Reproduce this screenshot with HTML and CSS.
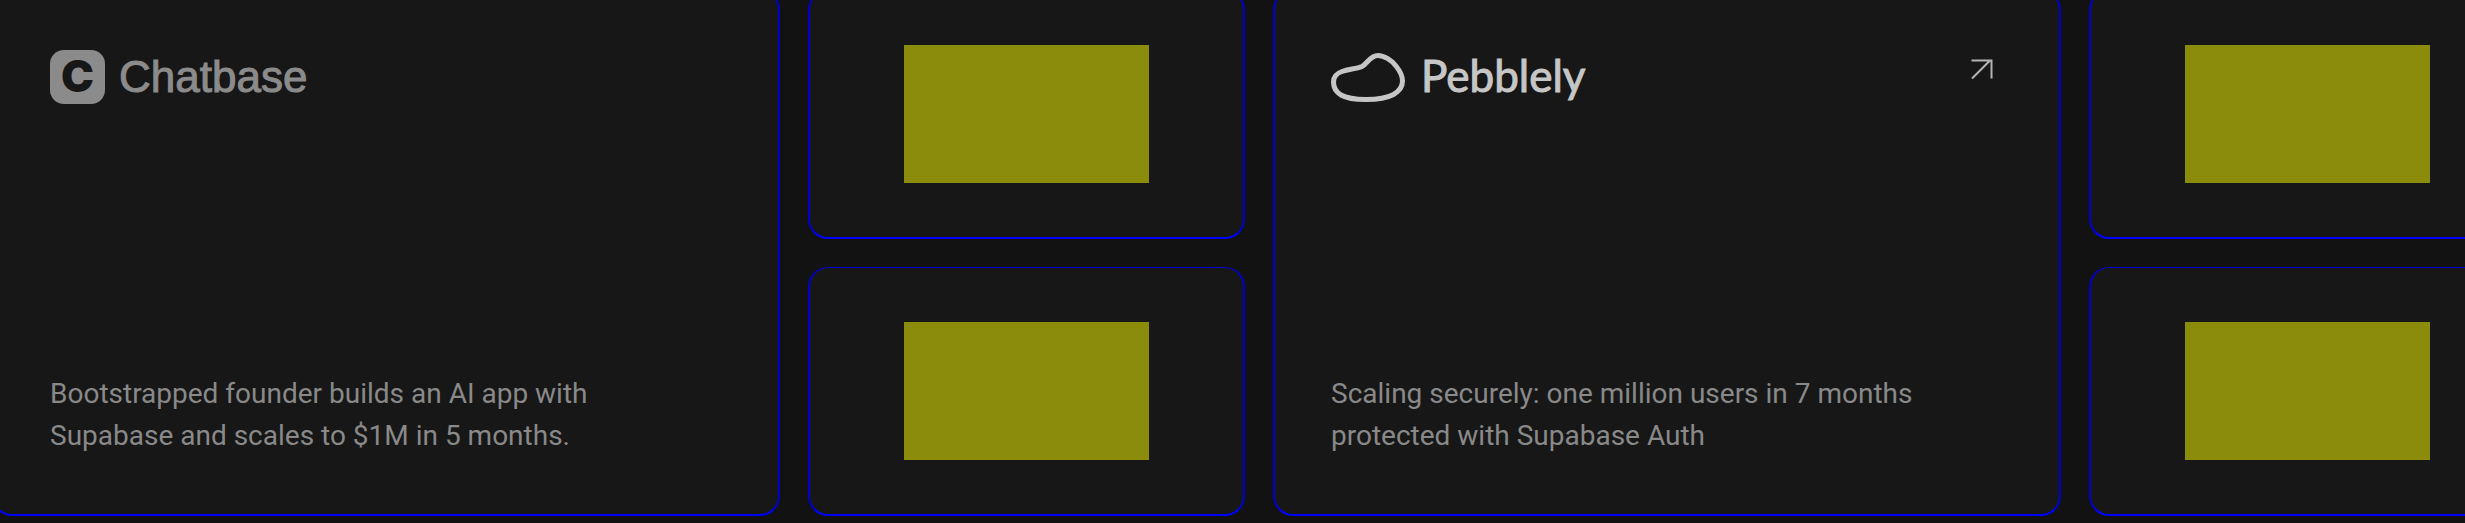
FILE: index.html
```html
<!DOCTYPE html>
<html lang="en">
<head>
<meta charset="utf-8">
<title>Customer stories</title>
<link rel="stylesheet" href="styles.css">
</head>
<body>
<main class="stories">
  <a class="card story" href="#chatbase">
    <span class="story-head">
      <span class="brand brand-chatbase">
        <span class="chatbase-mark" aria-hidden="true">C</span>
        <span class="wordmark">Chatbase</span>
      </span>
    </span>
    <span class="story-text">Bootstrapped founder builds an AI app with Supabase and scales to $1M in 5 months.</span>
  </a>
  <div class="stack">
    <div class="card tile"><div class="placeholder"></div></div>
    <div class="card tile"><div class="placeholder"></div></div>
  </div>
  <a class="card story" href="#pebblely">
    <span class="story-head">
      <span class="brand brand-pebblely">
        <svg class="pebble" viewBox="0 0 74 49" aria-hidden="true">
          <path d="M2.5 29C2.5 24 5 20.500 11 18.500C18 16 25 16 31 13.500C36 11 39 2.500 47 2.500C53 2.500 61 7.500 65 13C69 18 71.500 23 71.500 28C71.500 34 68.500 38 62.500 41.500C55 45.500 45 46.500 35 46.500C25 46.500 16 45.500 10 42C5 39 2.500 34 2.500 29Z"/>
        </svg>
        <span class="wordmark">Pebblely</span>
      </span>
      <svg class="arrow" viewBox="0 0 42 42" aria-hidden="true">
        <path d="M11 28.500L29.500 10M10.500 10.500H30.500M30.500 9.500V28.500"/>
      </svg>
    </span>
    <span class="story-text">Scaling securely: one million users in 7 months protected with Supabase Auth</span>
  </a>
  <div class="stack">
    <div class="card tile"><div class="placeholder"></div></div>
    <div class="card tile"><div class="placeholder"></div></div>
  </div>
</main>
</body>
</html>
```
FILE: styles.css
```css
* { box-sizing: border-box; }

body {
  margin: 0;
  background: #121212;
  color: #898989;
  font-family: Roboto, "Liberation Sans", sans-serif;
  overflow: hidden;
}

.stories {
  display: grid;
  grid-template-columns: 788px 437px 788px 437px;
  gap: 28px;
  margin: -10px 0 8px -8px;
}

.card {
  border: 2px solid #0000d4;
  border-top: 1px solid #0000d4;
  border-bottom-color: #0000ff;
  border-radius: 20px;
  background: #171717;
}

.story {
  display: flex;
  flex-direction: column;
  justify-content: space-between;
  min-height: 526px;
  padding: 59px 56px 57px;
  color: inherit;
  text-decoration: none;
}

.story-head {
  display: flex;
  justify-content: space-between;
  align-items: flex-start;
}

.brand {
  display: flex;
  align-items: center;
  height: 54px;
  gap: 14px;
}

.brand-pebblely { gap: 16px; }

.chatbase-mark {
  display: flex;
  align-items: center;
  justify-content: center;
  width: 55px;
  height: 54px;
  padding-bottom: 2px;
  border-radius: 14px;
  background: #8b8b8b;
  color: #171717;
  font: 900 44px/52px Inter, sans-serif;
}

.brand-chatbase .wordmark {
  font: 44px/54px "Liberation Sans", Arial, sans-serif;
  color: #8b8b8b;
  -webkit-text-stroke: 1px #8b8b8b;
}

.brand-pebblely .wordmark {
  padding-bottom: 4px;
  font: 44px/50px Lato, sans-serif;
  color: #c6c6c6;
  -webkit-text-stroke: 1px #c6c6c6;
}

.pebble {
  width: 74px;
  height: 49px;
  fill: none;
  stroke: #c6c6c6;
  stroke-width: 5;
}

.arrow {
  width: 42px;
  height: 42px;
  fill: none;
  stroke: #b4b4b4;
  stroke-width: 2;
}

.story-text {
  max-width: 600px;
  font-size: 28px;
  line-height: 42px;
}

.stack {
  display: grid;
  grid-template-rows: 1fr 1fr;
  gap: 28px;
}

.tile {
  display: flex;
  align-items: center;
  justify-content: center;
}

.placeholder {
  width: 245px;
  height: 138px;
  background: #8b8b0c;
}
```
